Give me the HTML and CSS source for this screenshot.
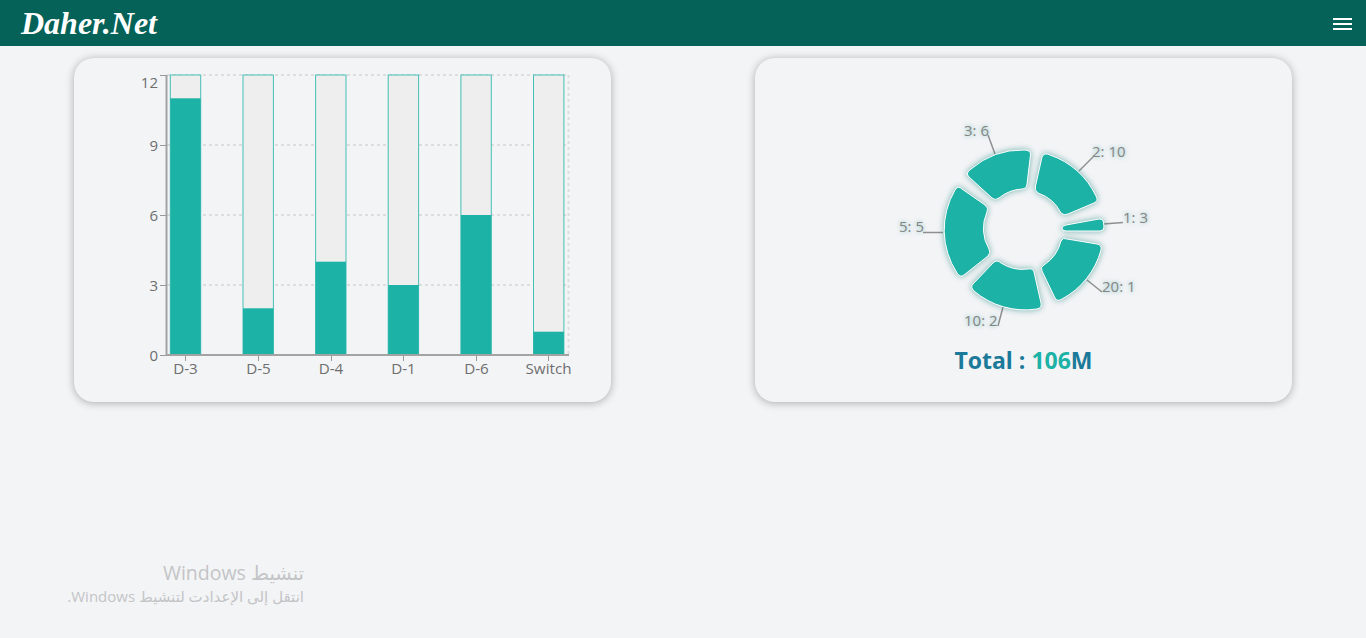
FILE: index.html
```html
<!DOCTYPE html>
<html lang="en">

<head>
    <meta charset="UTF-8">
    <meta name="viewport" content="width=device-width, initial-scale=1.0">
    <title>Daher.Net</title>
    <link rel="stylesheet" href="styles.css">
</head>

<body>
    <header class="topbar">
        <a class="logo">Daher.Net</a>
        <div class="menu-btn">
            <span></span>
            <span></span>
            <span></span>
        </div>
    </header>

    <main class="cards">
        <!-- bars -->
        <section class="card">
            <svg class="chart" viewBox="74 58 537 344" width="537" height="344">
                <g class="grid">
                    <line x1="167" y1="75" x2="568" y2="75"></line>
                    <line x1="167" y1="145" x2="568" y2="145"></line>
                    <line x1="167" y1="215" x2="568" y2="215"></line>
                    <line x1="167" y1="285" x2="568" y2="285"></line>
                    <line x1="568.5" y1="75" x2="568.5" y2="355"></line>
                </g>

                <g class="bar-bg">
                    <rect x="170.3" y="75" width="30.4" height="280"></rect>
                    <rect x="243" y="75" width="30.4" height="280"></rect>
                    <rect x="315.6" y="75" width="30.4" height="280"></rect>
                    <rect x="388.2" y="75" width="30.4" height="280"></rect>
                    <rect x="460.9" y="75" width="30.4" height="280"></rect>
                    <rect x="533.5" y="75" width="30.4" height="280"></rect>
                </g>
                <g class="bar-fill">
                    <rect x="170.3" y="98.3" width="30.4" height="256.7"></rect>
                    <rect x="243" y="308.3" width="30.4" height="46.7"></rect>
                    <rect x="315.6" y="261.7" width="30.4" height="93.3"></rect>
                    <rect x="388.2" y="285" width="30.4" height="70"></rect>
                    <rect x="460.9" y="215" width="30.4" height="140"></rect>
                    <rect x="533.5" y="331.7" width="30.4" height="23.3"></rect>
                </g>

                <g class="axis">
                    <line class="axis-main" x1="166.5" y1="75" x2="166.5" y2="355"></line>
                    <line class="axis-main" x1="166.5" y1="355" x2="569" y2="355"></line>
                    <line x1="160" y1="75.5" x2="167" y2="75.5"></line>
                    <line x1="160" y1="145.5" x2="167" y2="145.5"></line>
                    <line x1="160" y1="215.5" x2="167" y2="215.5"></line>
                    <line x1="160" y1="285.5" x2="167" y2="285.5"></line>
                    <line x1="160" y1="355.5" x2="167" y2="355.5"></line>
                    <line x1="185.5" y1="355" x2="185.5" y2="361"></line>
                    <line x1="258.5" y1="355" x2="258.5" y2="361"></line>
                    <line x1="331.5" y1="355" x2="331.5" y2="361"></line>
                    <line x1="403.5" y1="355" x2="403.5" y2="361"></line>
                    <line x1="476.5" y1="355" x2="476.5" y2="361"></line>
                    <line x1="548.5" y1="355" x2="548.5" y2="361"></line>
                </g>

                <g class="tick-y">
                    <text x="158" y="88">12</text>
                    <text x="158" y="151">9</text>
                    <text x="158" y="221">6</text>
                    <text x="158" y="291">3</text>
                    <text x="158" y="361">0</text>
                </g>
                <g class="tick-x">
                    <text x="185.5" y="374">D-3</text>
                    <text x="258.5" y="374">D-5</text>
                    <text x="331" y="374">D-4</text>
                    <text x="403.5" y="374">D-1</text>
                    <text x="476.5" y="374">D-6</text>
                    <text x="548.5" y="374">Switch</text>
                </g>
            </svg>
        </section>

        <!-- donut -->
        <section class="card card-donut">
            <svg class="chart" viewBox="755 100 537 240" width="537" height="240">
                <g class="leaders">
                    <polyline points="995,154 988,135"></polyline>
                    <polyline points="1079,171 1093,157"></polyline>
                    <polyline points="1103,224 1123,222.5"></polyline>
                    <polyline points="943,232.5 923,232.5"></polyline>
                    <polyline points="1087,280 1102,292"></polyline>
                    <polyline points="1003,307 998,326"></polyline>
                </g>
                <g class="slices">
                    <path d="M971 169 A79 79 0 0 1 1024 150 Q1031 150 1030.5 155 L1027 184 Q1026.5 189 1022 189 A40 40 0 0 0 999 198 Q995 201 992 198 L969 177 Q965 173 971 169 Z"></path>
                    <path d="M1050 155 A79 79 0 0 1 1096 196 Q1099 201 1094 203 L1068 214 Q1064 216 1061 213 A40 40 0 0 0 1038 193 Q1034 190 1035.5 186 L1042 157 Q1044 152 1050 155 Z"></path>
                    <path d="M1066 225 L1099 219 Q1103 218.5 1103.5 222 L1104 227 Q1104 231 1100 231 L1066 231 Q1062 231 1062 228 Q1062 226 1066 225 Z"></path>
                    <path d="M1067 239 L1097 244 Q1102 245 1101 250 A79 79 0 0 1 1062 299 Q1057 302 1055 298 L1042 271 Q1040 267 1044 265 A40 40 0 0 0 1061 241 Q1063 237 1067 239 Z"></path>
                    <path d="M1001 263 A40 40 0 0 0 1028 269 Q1033 268 1034 272 L1041 303 Q1042 308 1037 309 A79 79 0 0 1 974 291 Q970 287 973 284 L993 263 Q997 259 1001 263 Z"></path>
                    <path d="M962 189 L985 205 Q989 208 987 212 A40 40 0 0 0 989 249 Q991 253 988 256 L964 275 Q960 278 957 273 A79 79 0 0 1 955 190 Q958 185 962 189 Z"></path>
                </g>
                <g class="slice-labels">
                    <text x="964" y="136">3: 6</text>
                    <text x="1092" y="157">2: 10</text>
                    <text x="1123" y="223">1: 3</text>
                    <text x="899" y="232">5: 5</text>
                    <text x="1102" y="292">20: 1</text>
                    <text x="964" y="326">10: 2</text>
                </g>
            </svg>
            <h3 class="total">Total : <span class="total-num">106</span>M</h3>
        </section>
    </main>

    <div class="activate" dir="rtl">
        <div class="activate-title">تنشيط Windows</div>
        <div class="activate-sub">انتقل إلى الإعدادت لتنشيط Windows.</div>
    </div>
</body>

</html>
```

FILE: styles.css
```css
body {
    font-family: "Open Sans", "DejaVu Sans", sans-serif;
    background-color: #f3f4f6;
    margin: 0;
    padding: 0;
    height: 638px;
    overflow: hidden;
}

.topbar {
    height: 46px;
    background-color: #056258;
    display: flex;
    align-items: center;
    justify-content: space-between;
    padding: 0 14px 0 21px;
}

.logo {
    font-family: "Liberation Serif", serif;
    font-style: italic;
    font-weight: bold;
    font-size: 32px;
    color: #fff;
}

.menu-btn {
    display: flex;
    flex-direction: column;
    gap: 3px;
    width: 19px;
    margin-top: 1px;
}

.menu-btn span {
    display: block;
    height: 2px;
    background-color: #fff;
}

.cards {
    display: flex;
    justify-content: space-between;
    padding: 12px 74px;
}

.card {
    width: 537px;
    height: 344px;
    background-color: #f3f4f6;
    border-radius: 20px;
    box-shadow: 0px 1px 8px rgba(0, 0, 0, 0.3);
}

.card-donut {
    padding-top: 42px;
    height: 302px;
}

.chart {
    display: block;
}

.grid line {
    stroke: #ddd;
    stroke-width: 2;
    stroke-dasharray: 3 3;
}

.bar-bg rect {
    fill: #eee;
    stroke: #1cb2a6;
    stroke-width: 1;
    stroke-opacity: 0.8;
}

.bar-fill rect {
    fill: #1cb2a6;
}

.axis line {
    stroke: #999;
    stroke-width: 1;
}

.axis .axis-main {
    stroke: #a3a3a3;
    stroke-width: 2;
}

.tick-y text {
    font-size: 15px;
    fill: #6e6e6e;
    text-anchor: end;
}

.tick-x text {
    font-size: 15.2px;
    fill: #6e6e6e;
    text-anchor: middle;
}

.leaders polyline {
    fill: none;
    stroke: #8f8f8f;
    stroke-width: 1.5;
}

.slices path {
    fill: #1cb2a6;
    stroke: #fff;
    stroke-width: 1;
    filter: drop-shadow(0 0 3px rgba(28, 130, 125, 0.6));
}

.slice-labels text {
    font-size: 15px;
    fill: #858585;
    text-shadow: 0 0 4px rgba(28, 150, 140, 0.55);
}

.total {
    margin: 0;
    text-align: center;
    font-size: 23px;
    font-weight: 700;
    line-height: 40px;
    color: #1b7a9a;
}

.total-num {
    color: #1cb2a6;
}

/* windows watermark, sits over the page */
.activate {
    position: absolute;
    left: 40px;
    width: 264px;
    top: 560px;
    color: #c3c4c6;
}

.activate-title {
    font-size: 19.5px;
    line-height: 26px;
}

.activate-sub {
    font-size: 15px;
    line-height: 20px;
    white-space: nowrap;
}
```
